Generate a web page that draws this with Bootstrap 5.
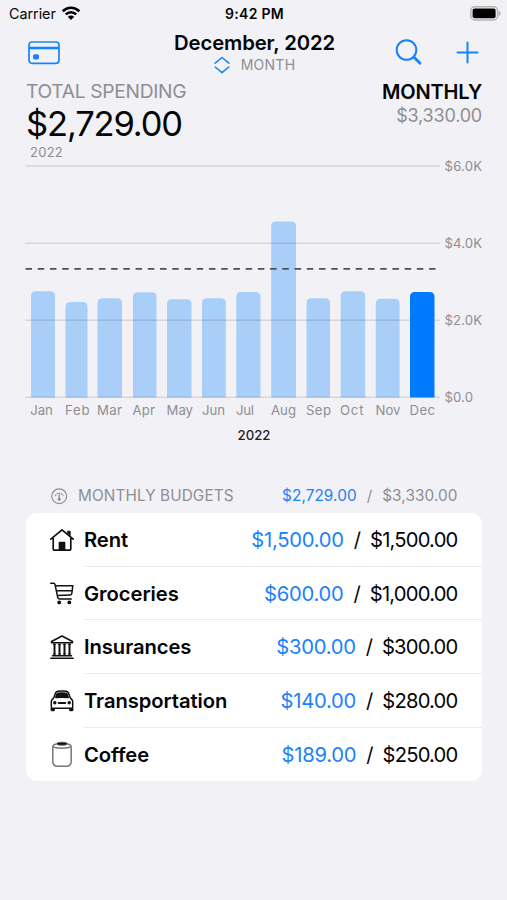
<!DOCTYPE html>
<html lang="en">
<head>
<meta charset="utf-8">
<meta name="viewport" content="width=device-width, initial-scale=1">
<title>Spending</title>
<link href="https://cdn.jsdelivr.net/npm/bootstrap@5.3.0/dist/css/bootstrap.min.css" rel="stylesheet">
<style>
  body { background: #f2f1f6; color: #050505; font-family: Inter, "Liberation Sans", sans-serif; height: 900px; overflow: hidden; }
  svg { display: block; flex: none; }
  .ink-blue { color: #1a82fb; }
  .ink-gray { color: #8e8e93; }
  .status { height: 27px; padding: 0 6px 0 9px; }
  .status > div { flex: 1 1 0; }
  .carrier { font-size: 14.4px; letter-spacing: -.05px; margin-right: 5px; }
  .clock { font-size: 14px; font-weight: 600; letter-spacing: .3px; margin-right: 1px; }
  .topbar { height: 52px; padding: 0 26px 0 28px; }
  .topbar > div { flex: 1 1 0; }
  .cardbtn { padding-top: 13px; }
  .title { font-size: 20.3px; font-weight: 600; line-height: 25px; padding-top: 3px; letter-spacing: -.12px; }
  .period { font-size: 14px; line-height: 19px; gap: 11px; letter-spacing: .25px; }
  .summary { height: 80px; padding: 0 25px 0 26px; }
  .cap { font-size: 19.2px; line-height: 25px; letter-spacing: -.3px; }
  .sum { font-size: 34.5px; line-height: 39px; letter-spacing: -1.15px; }
  .yr { font-size: 13px; line-height: 18px; padding-left: 4px; letter-spacing: .25px; }
  .mode { font-size: 20px; line-height: 25px; font-weight: 600; letter-spacing: -.2px; padding-top: 1px; }
  .limit { font-size: 18px; line-height: 22px; letter-spacing: -.2px; }
  .chart text { font-size: 13.2px; fill: #8e8e93; }
  .chart .axis-year { fill: #222; font-weight: 500; }
  .section-head { height: 34px; padding: 0 49.5px 0 51px; font-size: 15.3px; }
  .section-title { margin-left: 10px; letter-spacing: .12px; }
  .section-head .sum-part { letter-spacing: .1px; }
  .budgets { margin: 0 25px 0 26px; border-radius: 11px; overflow: hidden; background: #fff; }
  .budget { height: 53.7px; padding-left: 22px; }
  .budget-line { margin-left: 8px; padding: 1.5px 24.5px 0 0; border-bottom: 1.5px solid #ebebed; font-size: 20.2px; }
  .budget:last-child .budget-line { border-bottom-color: transparent; }
  .nm { font-weight: 600; letter-spacing: -.06px; }
  .spent { letter-spacing: -.25px; }
  .amt { letter-spacing: -.8px; }
  .sl { margin: 0 10px; }
  .budget-line .sl { margin: 0 9px 0 10px; }
</style>
<script src="https://cdn.jsdelivr.net/npm/bootstrap@5.3.0/dist/js/bootstrap.bundle.min.js"></script>
</head>
<body>
<div class="status d-flex align-items-center">
  <div class="d-flex align-items-center"><span class="carrier">Carrier</span>
    <svg width="20" height="15" viewBox="0 0 20 15" fill="none" stroke="#000" stroke-width="2.7"><path d="M1.7 5.2C6.400.6 13.600.6 18.300 5.200M4.800 8.400c3-2.900 7.400-2.900 10.400 0"/><path d="M10 14 6.800 10.800c1.800-1.700 4.600-1.700 6.400 0z" fill="#000" stroke="none"/></svg>
  </div>
  <span class="clock">9:42 PM</span>
  <div class="d-flex justify-content-end">
    <svg width="31" height="15" viewBox="0 0 31 15"><rect x=".8" y=".8" width="26.8" height="13.2" rx="4" fill="#f2f1f6" stroke="#b4b4b0" stroke-width="1.5"/><rect x="2.6" y="2.6" width="23" height="9.6" rx="2" fill="#000"/><path d="M28.8 5v5q1.8-.7 1.8-2.5T28.800 5z" fill="#aaa"/></svg>
  </div>
</div>
<div class="topbar d-flex">
  <div class="cardbtn">
    <svg class="ink-blue" width="32" height="25" viewBox="0 0 32 25" fill="none" stroke="currentColor" stroke-width="1.700"><rect x="1" y="2" width="30" height="21.300" rx="3"/><path d="M1 8h30" stroke-width="2.600"/><rect x="5.500" y="14.800" width="5" height="4.200" rx="1" fill="currentColor" stroke-width="1"/></svg>
  </div>
  <div class="text-center flex-grow-0 text-nowrap">
    <div class="title">December, 2022</div>
    <div class="period ink-gray d-flex justify-content-center align-items-center">
      <svg class="ink-blue" width="16" height="18" viewBox="0 0 16 18" fill="none" stroke="currentColor" stroke-width="1.600" stroke-linecap="round" stroke-linejoin="round"><path d="M1.200 7.200 8 1.500l6.800 5.700M1.200 11 8 16.600l6.800-5.600"/></svg>MONTH</div>
  </div>
  <div class="d-flex justify-content-end pt-2">
    <svg class="ink-blue" width="88" height="34" viewBox="0 0 88 34" fill="none" stroke="currentColor" stroke-width="2" stroke-linecap="round"><circle cx="13.500" cy="15" r="9.800"/><path d="m20.800 22 6.200 6.300" stroke-width="2.700"/><path d="M64.500 17.500h20M74.500 7.500v20"/></svg>
  </div>
</div>
<div class="summary d-flex justify-content-between">
  <div><div class="cap ink-gray">TOTAL SPENDING</div><div class="sum">$2,729.00</div><div class="yr ink-gray">2022</div></div>
  <div class="text-end"><div class="mode">MONTHLY</div><div class="limit ink-gray">$3,330.00</div></div>
</div>
<svg class="chart" width="507" height="320" viewBox="0 159 507 320">
  <g fill="#a9cef8">
    <path d="M31 397.500V296.300q0-5 5-5h14q5 0 5 5v101.200z"/>
    <path d="M65.500 397.500V307q0-5 5-5h12q5 0 5 5v90.500z"/>
    <path d="M97.500 397.500v-94.200q0-5 5-5H117q5 0 5 5v94.200z"/>
    <path d="M133 397.500V297.200q0-5 5-5h13.500q5 0 5 5v100.300z"/>
    <path d="M167 397.500v-93.300q0-5 5-5h14.500q5 0 5 5v93.300z"/>
    <path d="M202 397.500v-94.200q0-5 5-5h13.800q5 0 5 5v94.200z"/>
    <path d="M236.300 397.500V297q0-5 5-5h14.200q5 0 5 5v100.500z"/>
    <path d="M271.200 397.500V226.500q0-5 5-5h14.800q5 0 5 5v171z"/>
    <path d="M306.500 397.500v-94.200q0-5 5-5H325q5 0 5 5v94.200z"/>
    <path d="M340.700 397.500V296.300q0-5 5-5h14.500q5 0 5 5v101.200z"/>
    <path d="M375.800 397.500v-93.800q0-5 5-5h13.800q5 0 5 5v93.800z"/>
  </g>
  <path d="M25.500 166H440M25.500 243.300H440M25.500 320.300H440M25.500 397.300H440" stroke="#3c3c43" stroke-opacity=".15" stroke-width="1.500"/>
  <path d="M410 397.500V297q0-5 5-5h14.500q5 0 5 5v100.500z" fill="#007aff"/>
  <path d="M25.500 268.800H435.500" stroke="#505054" stroke-width="1.800" stroke-dasharray="6.500 5.730"/>
  <g>
    <text x="444.500" y="170.500" textLength="37.500">$6.0K</text><text x="444.500" y="247.700" textLength="37.500">$4.0K</text>
    <text x="444.500" y="324.700" textLength="37.500">$2.0K</text><text x="444.500" y="401.700" textLength="28.500">$0.0</text>
    <text x="30.300" y="415" textLength="22.500">Jan</text><text x="65" y="415" textLength="24.500">Feb</text>
    <text x="97" y="415" textLength="25">Mar</text><text x="132.500" y="415" textLength="22.500">Apr</text>
    <text x="166.500" y="415" textLength="26.500">May</text><text x="202" y="415" textLength="23">Jun</text>
    <text x="236" y="415" textLength="18">Jul</text><text x="271" y="415" textLength="25">Aug</text>
    <text x="306" y="415" textLength="25">Sep</text><text x="340" y="415" textLength="23.500">Oct</text>
    <text x="375.500" y="415" textLength="25">Nov</text><text x="409.500" y="415" textLength="25.500">Dec</text>
    <text class="axis-year" x="237.500" y="440" textLength="33">2022</text>
  </g>
</svg>
<div class="section-head d-flex align-items-center ink-gray">
  <svg width="17" height="17" viewBox="0 0 17 17" fill="none" stroke="currentColor" stroke-width="1.200"><circle cx="8.200" cy="8.200" r="7.400"/><path d="M4.300 8.200a4 4 0 0 1 7.800 0" stroke-dasharray="1.800 .6"/><path d="M8.200 6v5" stroke-linecap="round"/><circle cx="8.200" cy="11.200" r="1" fill="currentColor"/></svg>
  <span class="section-title">MONTHLY BUDGETS</span>
  <span class="sum-part ms-auto ink-blue">$2,729.00</span><span class="sl">/</span><span class="sum-part">$3,330.00</span>
</div>
<div class="budgets">
  <div class="budget d-flex align-items-center">
    <svg width="28" height="28" viewBox="0 0 28 28" fill="none" stroke="#111" stroke-width="1.700" stroke-linecap="round" stroke-linejoin="round"><path d="m2.800 13.200 11.200-9.400 11.200 9.400M5.200 12v10.500q0 1.700 1.700 1.700h14.200q1.700 0 1.700-1.700V12M20 8V5.500h1.800v4.200"/><path d="M11.500 23.500v-7h5v7z" fill="#111"/></svg>
    <div class="budget-line h-100 flex-grow-1 d-flex align-items-center"><span class="nm">Rent</span><span class="spent ink-blue ms-auto">$1,500.00</span><span class="sl">/</span><span class="amt">$1,500.00</span></div>
  </div>
  <div class="budget d-flex align-items-center">
    <svg width="28" height="28" viewBox="0 0 28 28" fill="none" stroke="#111" stroke-width="1.500" stroke-linecap="round" stroke-linejoin="round"><path d="M2.800 3.200h2.700q1.200 0 1.500 1.200l2.700 12.900q.3 1.600 2 1.600h11.500M7.300 5.800h17.500l-1 7.700q-.2 1.400-1.700 1.500L9.300 15.600M8.500 10.800h15"/><circle cx="11.200" cy="22.400" r="1.200" fill="#111"/><circle cx="21.300" cy="22.400" r="1.200" fill="#111"/></svg>
    <div class="budget-line h-100 flex-grow-1 d-flex align-items-center"><span class="nm">Groceries</span><span class="spent ink-blue ms-auto">$600.00</span><span class="sl">/</span><span class="amt">$1,000.00</span></div>
  </div>
  <div class="budget d-flex align-items-center">
    <svg width="28" height="28" viewBox="0 0 28 28" fill="none" stroke="#111" stroke-width="1.500" stroke-linecap="round" stroke-linejoin="round"><path d="M3.500 8.500 14 3l10.500 5.500v1.200h-21zM4.500 22.700h19M2.800 25.200h22.400"/><path d="M6.500 11.500v9.500M11.500 11.500v9.500M16.500 11.500v9.500M21.500 11.500v9.500" stroke-width="2"/><path d="M5.300 11.300h2.400M10.300 11.300h2.400M15.300 11.300h2.400M20.300 11.300h2.400M5.300 21h2.400M10.300 21h2.400M15.300 21h2.400M20.300 21h2.400" stroke-width="1"/></svg>
    <div class="budget-line h-100 flex-grow-1 d-flex align-items-center"><span class="nm">Insurances</span><span class="spent ink-blue ms-auto">$300.00</span><span class="sl">/</span><span class="amt">$300.00</span></div>
  </div>
  <div class="budget d-flex align-items-center">
    <svg width="28" height="28" viewBox="0 0 28 28" fill="none" stroke="#111" stroke-width="1.500" stroke-linejoin="round"><path d="M5.800 10.800 7.500 6q.6-1.500 2.200-1.700 4.300-.5 8.600 0 1.600.2 2.200 1.700l1.700 4.800 1.800 2q.7.900.7 2V20q0 1.300-1.300 1.300H4.600Q3.300 21.300 3.300 20v-5.200q0-1.100.7-2z"/><path d="m7.800 10.500 1-3.200q.3-.9 1.200-1 4-.4 8 0 .9.100 1.200 1l1 3.200q-6.200-.6-12.400 0z" fill="#111"/><path d="M3.300 21v1.800q0 .8.900.8h1.200q.8 0 .8-.8V21.500M24.700 21v1.800q0 .8-.9.800h-1.200q-.8 0-.8-.8V21.500" fill="#111"/><path d="M10.800 16h6.400" stroke-width="2.200" stroke-linecap="round"/><circle cx="6.800" cy="15.800" r="1" fill="#111"/><circle cx="21.200" cy="15.800" r="1" fill="#111"/></svg>
    <div class="budget-line h-100 flex-grow-1 d-flex align-items-center"><span class="nm">Transportation</span><span class="spent ink-blue ms-auto">$140.00</span><span class="sl">/</span><span class="amt">$280.00</span></div>
  </div>
  <div class="budget d-flex align-items-center">
    <svg width="28" height="28" viewBox="0 0 28 28" fill="none" stroke="#777" stroke-width="1.500"><path d="M8.500 3Q4.800 3.700 4.800 6V20.500q0 4.700 5 4.700h8.400q5 0 5-4.700V6q0-2.300-3.700-3M5 5.500q1.500 1.700 9 1.700t9-1.700"/><ellipse cx="14" cy="2.700" rx="5.300" ry="1.500" fill="#111" stroke="#555" stroke-width=".8"/></svg>
    <div class="budget-line h-100 flex-grow-1 d-flex align-items-center"><span class="nm">Coffee</span><span class="spent ink-blue ms-auto">$189.00</span><span class="sl">/</span><span class="amt">$250.00</span></div>
  </div>
</div>
</body>
</html>
